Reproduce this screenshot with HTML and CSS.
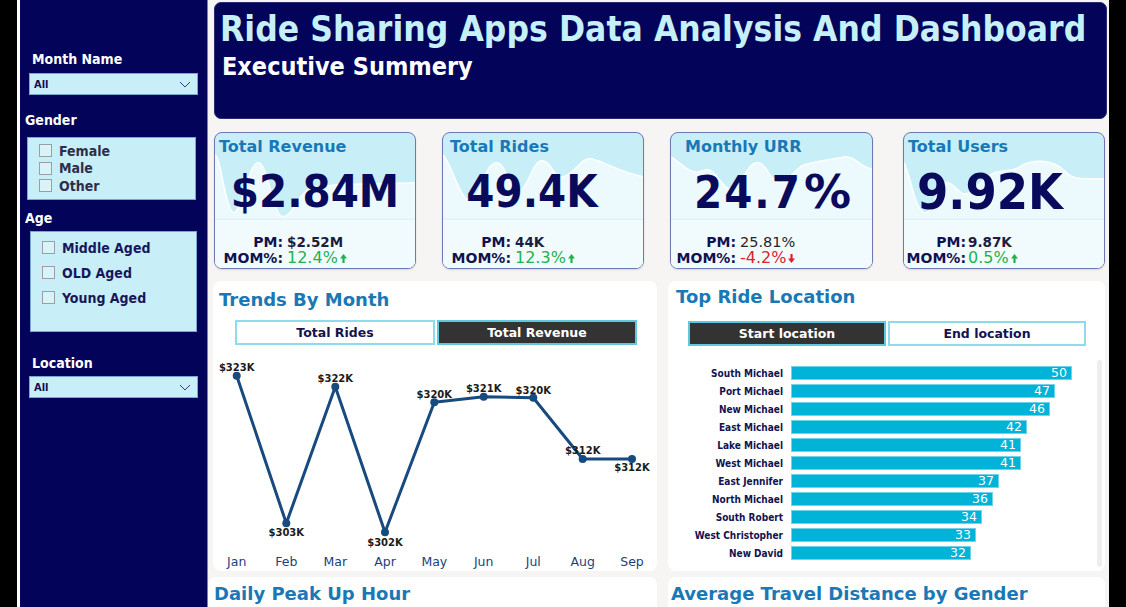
FILE: index.html
```html
<!DOCTYPE html>
<html>
<head>
<meta charset="utf-8">
<link rel="stylesheet" href="styles.css">
</head>
<body>
<div class="page">
  <div class="edge"></div>
  <aside class="sidebar">
    <div class="f-label f-month">Month Name</div>
    <div class="dropdown"><span>All</span><svg width="12" height="7" viewBox="0 0 12 7"><path d="M1,1 L6,6 L11,1" fill="none" stroke="#3b3b78" stroke-width="1"/></svg></div>
    <div class="f-label f-gender">Gender</div>
    <div class="checklist gender">
      <div class="check"><span class="cb"></span>Female</div>
      <div class="check"><span class="cb"></span>Male</div>
      <div class="check"><span class="cb"></span>Other</div>
    </div>
    <div class="f-label f-age">Age</div>
    <div class="checklist age">
      <div class="check"><span class="cb"></span>Middle Aged</div>
      <div class="check"><span class="cb"></span>OLD Aged</div>
      <div class="check"><span class="cb"></span>Young Aged</div>
    </div>
    <div class="f-label f-loc">Location</div>
    <div class="dropdown"><span>All</span><svg width="12" height="7" viewBox="0 0 12 7"><path d="M1,1 L6,6 L11,1" fill="none" stroke="#3b3b78" stroke-width="1"/></svg></div>
  </aside>

  <main class="main">
    <header class="header">
      <h1 class="title">Ride Sharing Apps Data Analysis And Dashboard</h1>
      <h2 class="subtitle">Executive Summery</h2>
    </header>

    <section class="kpis">
      <div class="kpi k1">
        <svg class="kpi-bg" viewBox="0 0 202 136" preserveAspectRatio="none">
          <path d="M0,22 C6,24 10,75 18,80 C26,85 34,28 44,30 C54,32 58,82 68,84 C78,86 84,60 96,56 C120,50 160,52 202,50 L202,136 L0,136 Z" fill="#ecf9fd"/>
          <path d="M0,22 C6,24 10,75 18,80 C26,85 34,28 44,30 C54,32 58,82 68,84 C78,86 84,60 96,56 C120,50 160,52 202,50" fill="none" stroke="#fff" stroke-width="1.5"/>
          <rect x="0" y="87" width="202" height="49" fill="#f1fbfe"/>
          <line x1="0" y1="87" x2="202" y2="87" stroke="#d9f2f8" stroke-width="1"/>
        </svg>
        <div class="kpi-title">Total Revenue</div>
        <div class="kpi-value">$2.84M</div>
        <div class="kpi-foot">
          <span class="lbl">PM:</span><span class="pm">$2.52M</span>
          <span class="lbl">MOM%:</span><span class="mom up">12.4%<svg class="arr" width="7" height="9" viewBox="0 0 7 9"><path d="M3.5,0 L7,4.5 L4.6,4.5 L4.6,9 L2.4,9 L2.4,4.5 L0,4.5 Z" fill="#22b24c"/></svg></span>
        </div>
      </div>

      <div class="kpi k2">
        <svg class="kpi-bg" viewBox="0 0 202 136" preserveAspectRatio="none">
          <path d="M0,22 C8,30 18,70 28,68 C38,66 42,30 54,30 C64,30 66,58 76,58 C86,58 90,28 100,28 C110,28 112,48 122,44 C134,40 140,24 150,26 C165,30 180,40 202,44 L202,136 L0,136 Z" fill="#ecf9fd"/>
          <path d="M0,22 C8,30 18,70 28,68 C38,66 42,30 54,30 C64,30 66,58 76,58 C86,58 90,28 100,28 C110,28 112,48 122,44 C134,40 140,24 150,26 C165,30 180,40 202,44" fill="none" stroke="#fff" stroke-width="1.5"/>
          <rect x="0" y="87" width="202" height="49" fill="#f1fbfe"/>
          <line x1="0" y1="87" x2="202" y2="87" stroke="#d9f2f8" stroke-width="1"/>
        </svg>
        <div class="kpi-title">Total Rides</div>
        <div class="kpi-value">49.4K</div>
        <div class="kpi-foot">
          <span class="lbl">PM:</span><span class="pm">44K</span>
          <span class="lbl">MOM%:</span><span class="mom up">12.3%<svg class="arr" width="7" height="9" viewBox="0 0 7 9"><path d="M3.5,0 L7,4.5 L4.6,4.5 L4.6,9 L2.4,9 L2.4,4.5 L0,4.5 Z" fill="#22b24c"/></svg></span>
        </div>
      </div>

      <div class="kpi k3">
        <svg class="kpi-bg" viewBox="0 0 202 136" preserveAspectRatio="none">
          <path d="M0,24 C10,30 20,44 32,38 C44,32 48,52 58,56 C70,60 74,32 86,30 C96,28 100,52 110,50 C120,48 124,36 134,32 C150,28 164,26 176,24 C186,24 192,36 202,36 L202,136 L0,136 Z" fill="#ecf9fd"/>
          <path d="M0,24 C10,30 20,44 32,38 C44,32 48,52 58,56 C70,60 74,32 86,30 C96,28 100,52 110,50 C120,48 124,36 134,32 C150,28 164,26 176,24 C186,24 192,36 202,36" fill="none" stroke="#fff" stroke-width="1.5"/>
          <rect x="0" y="87" width="202" height="49" fill="#f1fbfe"/>
          <line x1="0" y1="87" x2="202" y2="87" stroke="#d9f2f8" stroke-width="1"/>
        </svg>
        <div class="kpi-title">Monthly URR</div>
        <div class="kpi-value">24.7<span class="pct">%</span></div>
        <div class="kpi-foot">
          <span class="lbl">PM:</span><span class="pm light">25.81%</span>
          <span class="lbl">MOM%:</span><span class="mom down">-4.2%<svg class="arr" width="7" height="9" viewBox="0 0 7 9"><path d="M3.5,9 L7,4.5 L4.6,4.5 L4.6,0 L2.4,0 L2.4,4.5 L0,4.5 Z" fill="#e0202a"/></svg></span>
        </div>
      </div>

      <div class="kpi k4">
        <svg class="kpi-bg" viewBox="0 0 202 136" preserveAspectRatio="none">
          <path d="M0,30 C6,40 10,75 20,80 C30,84 34,48 44,50 C54,52 56,66 66,60 C76,54 80,44 92,40 C104,36 110,40 120,32 C134,26 150,28 160,36 C166,42 170,46 180,46 C190,46 196,46 202,46 L202,136 L0,136 Z" fill="#ecf9fd"/>
          <path d="M0,30 C6,40 10,75 20,80 C30,84 34,48 44,50 C54,52 56,66 66,60 C76,54 80,44 92,40 C104,36 110,40 120,32 C134,26 150,28 160,36 C166,42 170,46 180,46 C190,46 196,46 202,46" fill="none" stroke="#fff" stroke-width="1.5"/>
          <rect x="0" y="87" width="202" height="49" fill="#f1fbfe"/>
          <line x1="0" y1="87" x2="202" y2="87" stroke="#d9f2f8" stroke-width="1"/>
        </svg>
        <div class="kpi-title">Total Users</div>
        <div class="kpi-value">9.92K</div>
        <div class="kpi-foot">
          <span class="lbl">PM:</span><span class="pm">9.87K</span>
          <span class="lbl">MOM%:</span><span class="mom up">0.5%<svg class="arr" width="7" height="9" viewBox="0 0 7 9"><path d="M3.5,0 L7,4.5 L4.6,4.5 L4.6,9 L2.4,9 L2.4,4.5 L0,4.5 Z" fill="#22b24c"/></svg></span>
        </div>
      </div>
    </section>

    <section class="panels">
      <div class="panel trends">
        <div class="panel-title">Trends By Month</div>
        <div class="toggle t-trends">
          <div class="tbtn">Total Rides</div>
          <div class="tbtn on">Total Revenue</div>
        </div>
        <svg class="line-chart" width="444" height="220" viewBox="0 0 444 220">
          <polyline points="23.7,25.7 73.3,173.3 122.3,36.7 172,182.3 221.3,52.3 270.7,46.7 320.3,47.7 369.7,109 419,109" fill="none" stroke="#174a7e" stroke-width="3" stroke-linejoin="round"/>
          <g fill="#174a7e">
            <circle cx="23.7" cy="25.7" r="4"/><circle cx="73.3" cy="173.3" r="4"/><circle cx="122.3" cy="36.7" r="4"/>
            <circle cx="172" cy="182.3" r="4"/><circle cx="221.3" cy="52.3" r="4"/><circle cx="270.7" cy="46.7" r="4"/>
            <circle cx="320.3" cy="47.7" r="4"/><circle cx="369.7" cy="109" r="4"/><circle cx="419" cy="109" r="4"/>
          </g>
          <g class="pt-lbl" text-anchor="middle">
            <text x="23.7" y="21">$323K</text>
            <text x="73.3" y="186">$303K</text>
            <text x="122.3" y="32">$322K</text>
            <text x="172" y="196">$302K</text>
            <text x="221.3" y="48">$320K</text>
            <text x="270.7" y="42">$321K</text>
            <text x="320.3" y="44">$320K</text>
            <text x="369.7" y="104">$312K</text>
            <text x="419" y="121">$312K</text>
          </g>
          <g class="ax-lbl" text-anchor="middle">
            <text x="23.7" y="216">Jan</text>
            <text x="73.3" y="216">Feb</text>
            <text x="122.3" y="216">Mar</text>
            <text x="172" y="216">Apr</text>
            <text x="221.3" y="216">May</text>
            <text x="270.7" y="216">Jun</text>
            <text x="320.3" y="216">Jul</text>
            <text x="369.7" y="216">Aug</text>
            <text x="419" y="216">Sep</text>
          </g>
        </svg>
      </div>

      <div class="panel locations">
        <div class="panel-title">Top Ride Location</div>
        <div class="toggle t-loc">
          <div class="tbtn on">Start location</div>
          <div class="tbtn">End location</div>
        </div>
        <div class="bars-area">
          <div class="bars">
            <div class="brow"><span class="blabel">South Michael</span><span class="bar" style="width:281px">50</span></div>
            <div class="brow"><span class="blabel">Port Michael</span><span class="bar" style="width:264px">47</span></div>
            <div class="brow"><span class="blabel">New Michael</span><span class="bar" style="width:259px">46</span></div>
            <div class="brow"><span class="blabel">East Michael</span><span class="bar" style="width:236px">42</span></div>
            <div class="brow"><span class="blabel">Lake Michael</span><span class="bar" style="width:230px">41</span></div>
            <div class="brow"><span class="blabel">West Michael</span><span class="bar" style="width:230px">41</span></div>
            <div class="brow"><span class="blabel">East Jennifer</span><span class="bar" style="width:208px">37</span></div>
            <div class="brow"><span class="blabel">North Michael</span><span class="bar" style="width:202px">36</span></div>
            <div class="brow"><span class="blabel">South Robert</span><span class="bar" style="width:191px">34</span></div>
            <div class="brow"><span class="blabel">West Christopher</span><span class="bar" style="width:185px">33</span></div>
            <div class="brow"><span class="blabel">New David</span><span class="bar" style="width:180px">32</span></div>
          </div>
          <div class="scroll"></div>
        </div>
      </div>
    </section>

    <section class="bottom">
      <div class="panel b-left"><div class="panel-title">Daily Peak Up Hour</div></div>
      <div class="panel b-right"><div class="panel-title">Average Travel Distance by Gender</div></div>
    </section>
  </main>
  <div class="edge"></div>
</div>
</body>
</html>
```

FILE: styles.css
```css
* { box-sizing: border-box; }
html, body { margin: 0; padding: 0; }
body {
  width: 1126px;
  height: 607px;
  overflow: hidden;
  background: #000;
  font-family: "DejaVu Sans", Verdana, sans-serif;
}
.page {
  display: flex;
  height: 607px;
}
.edge {
  width: 17px;
  flex: 0 0 17px;
  background: #000;
}

/* ---------- sidebar ---------- */
.sidebar {
  flex: 0 0 191px;
  width: 191px;
  background: #03035a;
  border-left: 3px solid #ffffff;
  border-right: 1px solid #7d7db4;
  font-family: "DejaVu Sans Condensed", Tahoma, sans-serif;
}
.f-label {
  color: #ffffff;
  font-weight: bold;
  font-size: 14px;
  line-height: 18px;
}
.f-month { margin: 50px 0 5px 12px; }
.f-gender { margin: 16px 0 8px 5px; }
.f-age { margin: 9px 0 4px 5px; }
.f-loc { margin: 22px 0 4px 12px; }

.dropdown {
  margin-left: 9px;
  width: 169px;
  height: 22px;
  background: #c8eff8;
  border: 1px solid #7aa6d6;
  display: flex;
  align-items: center;
  justify-content: space-between;
  padding: 1px 6px 0 4px;
  color: #0e0e50;
  font-size: 11px;
  font-weight: bold;
}
.checklist {
  background: #c8eff8;
  border: 1px solid #7aa6d6;
}
.checklist.gender {
  margin-left: 7px;
  width: 169px;
  height: 63px;
  padding: 4px 0 0 11px;
}
.checklist.age {
  margin-left: 10px;
  width: 167px;
  height: 101px;
  padding: 3px 0 0 11px;
}
.check {
  display: flex;
  align-items: center;
  font-weight: bold;
  font-size: 14px;
}
.gender .check { height: 17.5px; color: #2e2e48; }
.age .check { height: 25px; color: #17175a; }
.cb {
  display: inline-block;
  width: 13px;
  height: 13px;
  border: 1px solid #9a9ea6;
  background: #d9f3f9;
  margin-right: 7px;
}

/* ---------- main ---------- */
.main {
  flex: 1 1 auto;
  background: #f6f5f3;
  padding: 2px 2px 0 5px;
  display: flex;
  flex-direction: column;
  overflow: hidden;
}
.header {
  margin-left: 1px;
  height: 117px;
  background: #03035a;
  border: 1px solid #2b2b6e;
  border-radius: 7px;
  padding: 5px 0 0 5px;
}
.title {
  margin: 0;
  color: #c6f0f8;
  font-family: "DejaVu Sans Condensed", Tahoma, sans-serif;
  font-weight: bold;
  font-size: 35px;
  letter-spacing: 0.07px;
  line-height: 42px;
}
.subtitle {
  margin: 3px 0 0 2px;
  color: #ffffff;
  font-family: "DejaVu Sans Condensed", Tahoma, sans-serif;
  font-weight: bold;
  font-size: 25px;
  line-height: 28px;
}

/* ---------- KPI cards ---------- */
.kpis {
  margin: 13px 2px 0 1px;
  height: 137px;
  display: flex;
}
.kpi {
  position: relative;
  width: 202px;
  height: 137px;
  border: 1px solid #6e78b4;
  border-radius: 8px;
  background: #c8eff8;
  overflow: hidden;
  display: flex;
  flex-direction: column;
  box-shadow: 0 1px 2px rgba(0,0,0,0.12);
}
.k2 { margin-left: 26px; }
.k3 { margin-left: 26px; width: 203px; }
.k4 { margin-left: auto; }
.kpi-bg {
  position: absolute;
  left: 0; top: 0;
  width: 100%;
  height: 100%;
}
.kpi-title, .kpi-value, .kpi-foot { position: relative; }
.kpi-title {
  height: 27px;
  line-height: 27px;
  color: #1a78b6;
  font-weight: bold;
  font-size: 16px;
  padding-left: 4px;
}
.k2 .kpi-title { padding-left: 7px; }
.k3 .kpi-title { padding-left: 14px; }
.kpi-value {
  margin-top: 6px;
  height: 52px;
  line-height: 52px;
  text-align: center;
  color: #0a0a5c;
  font-family: "DejaVu Sans Condensed", Tahoma, sans-serif;
  font-weight: bold;
  font-size: 45px;
  white-space: nowrap;
}
.k2 .kpi-value { padding-right: 22px; }
.k3 .kpi-value { letter-spacing: 2px; padding-left: 2px; }
.k3 .pct {
  font-family: "DejaVu Sans", Verdana, sans-serif;
  font-size: 47px;
  letter-spacing: 0;
  margin-left: 2px;
}
.k4 .kpi-value { padding-right: 28px; font-size: 50px; }
.kpi-foot {
  margin-top: 16px;
  display: grid;
  grid-template-columns: 68px auto;
  column-gap: 4px;
  line-height: 16px;
}
.k3 .kpi-foot { grid-template-columns: 65px auto; }
.k4 .kpi-foot { grid-template-columns: 62px auto; column-gap: 2px; }
.lbl {
  text-align: right;
  color: #12124f;
  font-weight: bold;
  font-size: 14px;
}
.pm {
  color: #1d1d3c;
  font-weight: bold;
  font-size: 13.5px;
}
.pm.light { font-weight: normal; font-size: 14.5px; color: #262626; }
.mom {
  font-size: 16px;
  display: flex;
  align-items: center;
}
.mom.up { color: #22b24c; }
.mom.down { color: #e0202a; }
.arr { margin-left: 2px; }

/* ---------- panels ---------- */
.panel {
  background: #ffffff;
  border-radius: 8px;
}
.panel-title {
  color: #1a78b6;
  font-weight: bold;
  font-size: 18px;
  line-height: 24px;
}
.panels {
  margin-top: 12px;
  height: 290px;
  display: grid;
  grid-template-columns: 444px 437px;
  column-gap: 11px;
}
.trends { padding: 7px 0 0 6px; }
.locations { padding: 4px 0 0 8px; }

.toggle {
  display: flex;
  gap: 2px;
}
.t-trends { margin: 8px 0 0 16px; }
.t-loc { margin: 12px 0 0 12px; }
.tbtn {
  width: 200px;
  height: 25px;
  border: 2px solid #8ddcee;
  background: #ffffff;
  color: #131350;
  font-weight: bold;
  font-size: 12.5px;
  display: flex;
  align-items: center;
  justify-content: center;
}
.t-loc .tbtn { width: 198px; }
.tbtn.on {
  background: #333333;
  color: #ffffff;
  border-color: #5ec8de;
}
.line-chart {
  display: block;
  margin: 5px 0 0 -6px;
}
.pt-lbl text {
  font-family: "DejaVu Sans", Verdana, sans-serif;
  font-weight: bold;
  font-size: 10px;
  fill: #1b1b1b;
}
.ax-lbl text {
  font-family: "DejaVu Sans", Verdana, sans-serif;
  font-size: 12.5px;
  fill: #1c3f7c;
}

.bars-area {
  margin: 14px 0 0 -8px;
  height: 207px;
  display: flex;
}
.bars {
  flex: 1 1 auto;
  padding-top: 4px;
}
.brow {
  height: 18px;
  display: flex;
  align-items: center;
}
.blabel {
  width: 115px;
  flex: 0 0 115px;
  text-align: right;
  color: #12124f;
  font-family: "DejaVu Sans Condensed", Tahoma, sans-serif;
  font-weight: bold;
  font-size: 10px;
}
.bar {
  margin-left: 8px;
  height: 14px;
  background: #02b3d8;
  border: 1px solid #6fd3ea;
  color: #ffffff;
  font-size: 12.5px;
  line-height: 12px;
  text-align: right;
  padding-right: 4px;
}
.scroll {
  width: 5px;
  flex: 0 0 5px;
  margin-right: 3px;
  background: #eeeeee;
  border-radius: 3px;
}

.bottom {
  margin: 6px 0 0 -5px;
  display: grid;
  grid-template-columns: 449px 437px;
  column-gap: 11px;
  flex: 1 1 auto;
}
.b-left { padding: 5px 0 0 6px; border-radius: 8px 8px 0 0; }
.b-right { padding: 5px 0 0 3px; border-radius: 8px 8px 0 0; }
```
